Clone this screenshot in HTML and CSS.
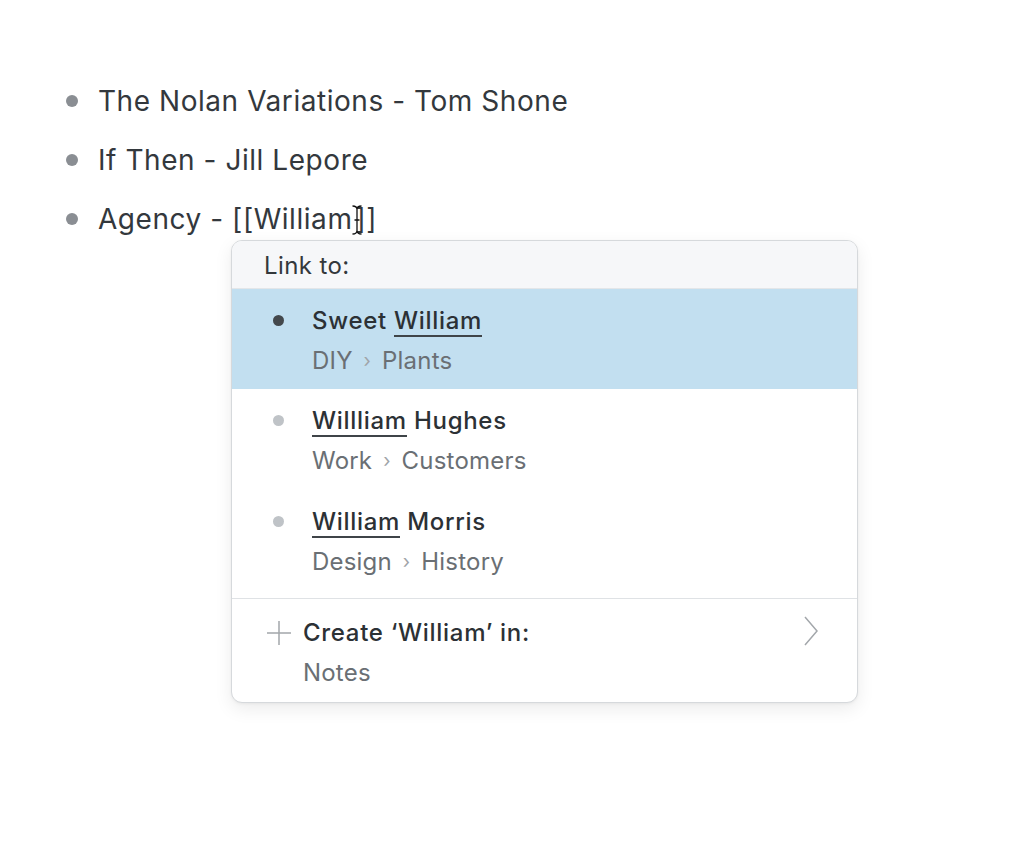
FILE: index.html
```html
<!DOCTYPE html>
<html>
<head>
<meta charset="utf-8">
<link rel="stylesheet" href="styles.css">
</head>
<body>
<div class="page">
  <ul class="notes">
    <li class="note"><span class="dot"></span><span class="note-text">The Nolan Variations - Tom Shone</span></li>
    <li class="note"><span class="dot"></span><span class="note-text">If Then - Jill Lepore</span></li>
    <li class="note"><span class="dot"></span><span class="note-text">Agency - [[William<span class="gap"></span>]]</span></li>
  </ul>
  <svg class="ibeam" width="12" height="30" viewBox="0 0 12 30"><path d="M1.5 1 C4 1 6 2 6 4.5 L6 25.5 C6 28 4 29 1.5 29 M10.5 1 C8 1 6 2 6 4.5 M6 25.5 C6 28 8 29 10.5 29 M3.5 15 L8.5 15" fill="none" stroke="#111" stroke-width="1.3"/></svg>

  <div class="popup">
    <div class="popup-head">Link to:</div>
    <div class="item selected">
      <span class="item-dot dark"></span>
      <div class="item-body">
        <div class="item-title">Sweet <u>William</u></div>
        <div class="item-path">DIY <span class="sep">›</span> Plants</div>
      </div>
    </div>
    <div class="item">
      <span class="item-dot"></span>
      <div class="item-body">
        <div class="item-title"><u>Willliam</u> Hughes</div>
        <div class="item-path">Work <span class="sep">›</span> Customers</div>
      </div>
    </div>
    <div class="item">
      <span class="item-dot"></span>
      <div class="item-body">
        <div class="item-title"><u>William</u> Morris</div>
        <div class="item-path">Design <span class="sep">›</span> History</div>
      </div>
    </div>
    <div class="create">
      <svg class="plus" width="26" height="26" viewBox="0 0 26 26"><path d="M13 1 V25 M1 13 H25" stroke="#a3a7ab" stroke-width="1.5" fill="none"/></svg>
      <div class="create-body">
        <div class="create-title">Create ‘William’ in:</div>
        <div class="item-path">Notes</div>
      </div>
      <svg class="chev" width="16" height="30" viewBox="0 0 16 30"><path d="M2 1 L14 15 L2 29" stroke="#a3a7ab" stroke-width="1.5" fill="none"/></svg>
    </div>
  </div>
</div>
</body>
</html>
```

FILE: styles.css
```css
* { box-sizing: border-box; }
html, body { margin: 0; padding: 0; background: #fff; }
body {
  font-family: Inter, "Noto Sans", "Liberation Sans", sans-serif;
  color: #33383d;
  width: 1024px;
  height: 852px;
  overflow: hidden;
}
.page { position: relative; height: 852px; }
.notes {
  list-style: none;
  margin: 0;
  padding: 71px 0 0 66px;
}
.note {
  display: flex;
  align-items: center;
  height: 59px;
  font-size: 28px;
  letter-spacing: 0.55px;
}
.gap { display: inline-block; width: 3px; }
.dot {
  width: 12px; height: 12px;
  border-radius: 50%;
  background: #8a8e93;
  margin-right: 20px;
  flex: none;
}
.ibeam { position: absolute; left: 351px; top: 205px; }

.popup {
  position: absolute;
  left: 231px; top: 240px;
  width: 627px;
  height: 463px;
  background: #fff;
  border: 1px solid #d6d9dc;
  border-radius: 11px;
  overflow: hidden;
  box-shadow: 0 6px 18px rgba(0,0,0,0.08), 0 1px 3px rgba(0,0,0,0.05);
  display: flex;
  flex-direction: column;
}
.popup-head {
  height: 48px;
  background: #f6f7f9;
  border-bottom: 1px solid #e3e6e9;
  padding: 10px 0 0 32px;
  font-size: 24px;
  letter-spacing: 0.4px;
  color: #33383c;
}
.item {
  display: flex;
  align-items: flex-start;
  height: 101px;
  padding: 16px 0 0 41px;
}
.item.selected { background: #c2dff0; height: 100px; }
.item-dot {
  width: 11px; height: 11px;
  border-radius: 50%;
  background: #bfc3c7;
  margin: 10px 28px 0 0;
  flex: none;
}
.item-dot.dark { background: #43484c; }
.item-title {
  font-size: 24px;
  font-weight: 500;
  letter-spacing: 0.7px;
  color: #2c3135;
  line-height: 32px;
}
.item-title u {
  text-decoration: none;
  border-bottom: 2px solid #3f4448;
  padding-bottom: 0;
}
.item-path {
  font-size: 24px;
  letter-spacing: 0.2px;
  color: #6a6f74;
  line-height: 32px;
  margin-top: 8px;
}
.sep { color: #a0a4a8; font-size: 19px; margin: 0 4px; position: relative; top: -2px; }
.create {
  margin-top: 7px;
  border-top: 1px solid #dfe2e5;
  flex: 1;
  display: flex;
  align-items: flex-start;
  padding: 18px 0 0 34px;
}
.plus { flex: none; margin: 3px 11px 0 0; }
.create-body { flex: 1; }
.create-title {
  font-size: 24px;
  font-weight: 500;
  letter-spacing: 0.7px;
  color: #2c3135;
  line-height: 32px;
}
.create .item-path { margin-top: 8px; }
.chev { flex: none; margin: -1px 38px 0 0; }
```
